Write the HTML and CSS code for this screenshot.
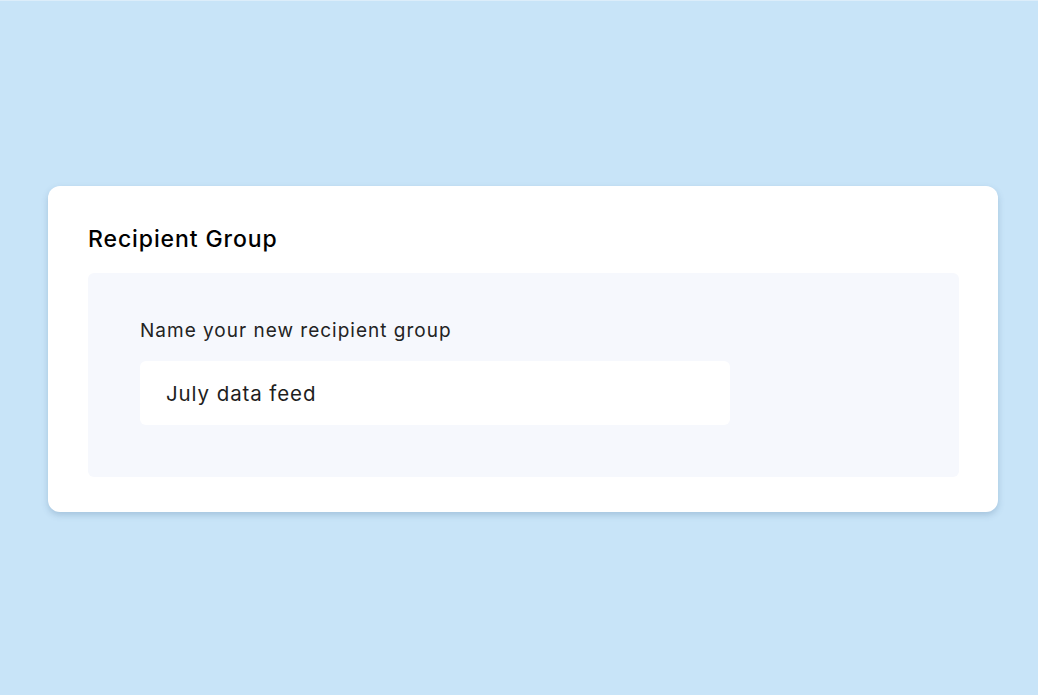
FILE: index.html
```html
<!DOCTYPE html>
<html>
<head>
<meta charset="utf-8">
<link rel="stylesheet" href="styles.css">
</head>
<body>
<div class="page">
  <section class="card">
    <h2 class="title">Recipient Group</h2>
    <div class="panel">
      <label class="label" for="group">Name your new recipient group</label>
      <div class="input" id="group">July data feed</div>
    </div>
  </section>
</div>
</body>
</html>
```
FILE: styles.css
```css
html, body {
  margin: 0;
  padding: 0;
  background: #c8e4f8;
}
body {
  font-family: Inter, "Open Sans", sans-serif;
  color: #1b1b1b;
}
.page {
  width: 1038px;
  height: 695px;
  border-top: 1px solid #dcedfa;
  box-sizing: border-box;
  padding: 185px 40px 0 48px;
}
.card {
  width: 950px;
  box-sizing: border-box;
  background: #fff;
  border-radius: 12px;
  box-shadow: 0 3px 6px rgba(60, 100, 140, 0.25);
  padding: 39px 39px 35px 40px;
}
.title {
  margin: 0 0 20px 0;
  font-size: 23px;
  font-weight: 500;
  line-height: 28px;
  color: #000;
  letter-spacing: 0.9px;
}
.panel {
  background: #f6f8fd;
  border-radius: 6px;
  padding: 45px 51px 52px 52px;
  display: flex;
  flex-direction: column;
  gap: 17px;
}
.label {
  font-size: 19px;
  line-height: 26px;
  color: #232323;
  letter-spacing: 1px;
}
.input {
  width: 590px;
  height: 64px;
  box-sizing: border-box;
  background: #fff;
  border-radius: 6px;
  padding: 0 26px;
  display: flex;
  align-items: center;
  font-size: 20.5px;
  color: #1e1e1e;
  letter-spacing: 0.9px;
}
```
